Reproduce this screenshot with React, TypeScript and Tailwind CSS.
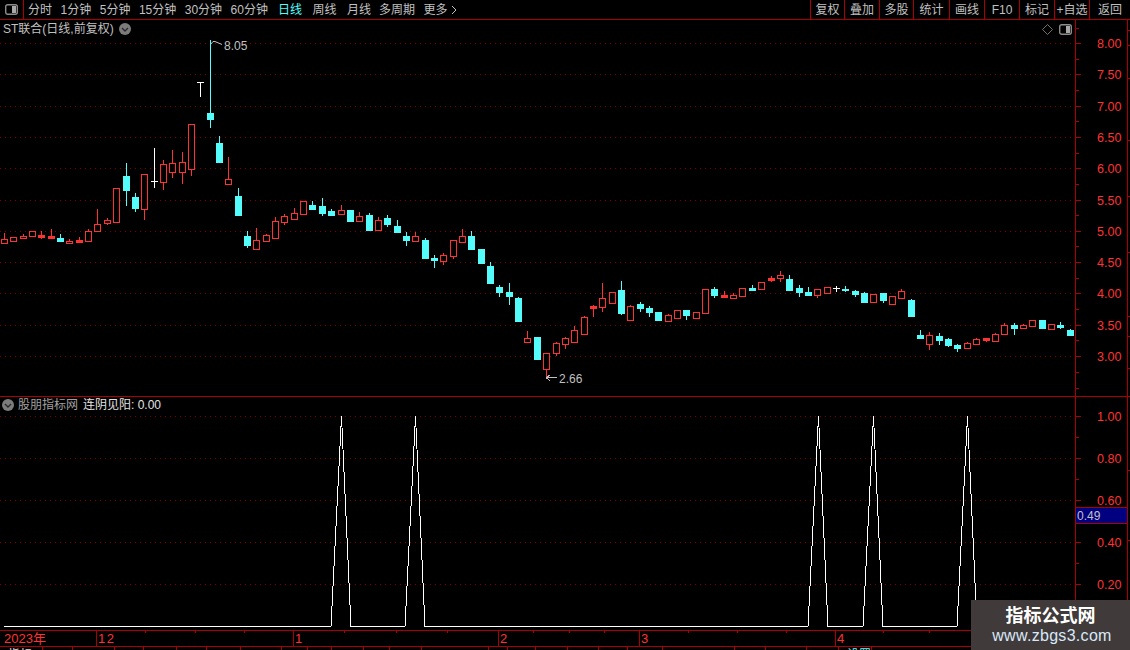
const RED = "#ff3232";
const CYAN = "#54fcfc";
const LINE = "#aa0000";

// x, body top, body bottom, high, low, kind (r hollow red, R solid red, c cyan, w white cross)
type Candle = [number, number, number, number, number, string];

const candles: Candle[] = [
  [4, 239, 243, 233, 243, "r"], [13, 237, 241, 237, 242, "r"], [23, 236, 238, 234, 238, "r"], [32, 231, 236, 231, 236, "r"],
  [41, 235, 237, 231, 239, "R"], [51, 236, 238, 229, 238, "R"], [60, 238, 241, 234, 242, "c"], [69, 241, 243, 239, 243, "r"],
  [79, 240, 242, 237, 242, "R"], [88, 231, 241, 229, 241, "r"], [97, 224, 231, 209, 231, "r"], [107, 220, 223, 218, 225, "r"],
  [116, 188, 222, 188, 223, "r"], [126, 176, 190, 163, 206, "c"], [135, 197, 208, 193, 212, "c"], [144, 174, 209, 174, 220, "r"],
  [154, 181, 181, 148, 188, "w"], [163, 164, 182, 160, 190, "r"], [172, 163, 172, 150, 178, "r"], [182, 162, 172, 152, 184, "r"],
  [191, 124, 169, 124, 176, "r"], [200, 82, 82, 82, 97, "w"], [210, 113, 119, 40, 128, "c"], [219, 143, 162, 136, 162, "c"],
  [228, 179, 184, 157, 184, "r"], [238, 196, 215, 188, 215, "c"], [247, 236, 245, 231, 248, "c"], [256, 240, 249, 228, 250, "r"],
  [266, 235, 241, 234, 241, "r"], [275, 221, 238, 217, 238, "r"], [284, 216, 222, 214, 225, "r"], [294, 213, 219, 208, 219, "r"],
  [303, 201, 214, 201, 215, "r"], [312, 205, 209, 201, 210, "c"], [322, 206, 213, 198, 216, "c"], [331, 211, 215, 209, 216, "c"],
  [341, 210, 214, 205, 214, "r"], [350, 210, 221, 210, 221, "c"], [359, 216, 221, 212, 221, "r"], [369, 215, 230, 213, 230, "c"],
  [378, 220, 230, 217, 230, "r"], [387, 218, 224, 215, 227, "c"], [397, 226, 232, 220, 233, "c"], [406, 236, 240, 232, 246, "c"],
  [415, 236, 241, 232, 242, "r"], [425, 240, 258, 238, 259, "c"], [434, 258, 260, 255, 268, "c"], [443, 255, 261, 253, 265, "r"],
  [453, 240, 256, 240, 259, "r"], [462, 236, 242, 229, 242, "r"], [471, 236, 249, 231, 250, "c"], [481, 249, 263, 249, 263, "c"],
  [490, 266, 283, 262, 283, "c"], [499, 287, 292, 285, 297, "c"], [509, 292, 296, 283, 305, "c"], [518, 298, 321, 297, 321, "c"],
  [527, 338, 342, 331, 343, "r"], [537, 337, 359, 337, 359, "c"], [546, 353, 369, 353, 377, "r"], [556, 343, 353, 342, 356, "r"],
  [565, 338, 344, 337, 349, "r"], [574, 330, 342, 326, 342, "r"], [584, 317, 334, 316, 334, "r"], [593, 306, 308, 305, 317, "R"],
  [602, 298, 307, 283, 312, "r"], [612, 292, 303, 292, 304, "r"], [621, 290, 313, 281, 315, "c"], [630, 306, 320, 305, 320, "r"],
  [640, 304, 308, 302, 312, "c"], [649, 308, 312, 306, 317, "c"], [658, 312, 320, 312, 321, "c"], [668, 315, 321, 314, 322, "r"],
  [677, 310, 318, 310, 318, "r"], [686, 310, 315, 310, 320, "c"], [696, 312, 318, 312, 318, "r"], [705, 289, 313, 289, 313, "r"],
  [714, 289, 295, 287, 298, "c"], [724, 295, 297, 291, 298, "R"], [733, 295, 298, 293, 298, "r"], [742, 288, 296, 288, 296, "r"],
  [752, 288, 290, 285, 291, "c"], [761, 282, 289, 282, 290, "r"], [771, 278, 280, 276, 282, "R"], [780, 275, 278, 271, 282, "r"],
  [789, 279, 290, 275, 291, "c"], [799, 288, 292, 285, 297, "c"], [808, 292, 295, 287, 296, "c"], [817, 289, 295, 289, 298, "r"],
  [827, 287, 293, 287, 293, "r"], [836, 288, 288, 286, 292, "w"], [845, 289, 290, 286, 292, "c"], [855, 291, 294, 290, 297, "c"],
  [864, 293, 302, 292, 303, "c"], [873, 294, 302, 294, 303, "r"], [883, 293, 300, 293, 303, "c"], [892, 296, 304, 296, 305, "r"],
  [901, 291, 298, 289, 298, "r"], [911, 300, 316, 299, 316, "c"], [920, 335, 338, 330, 338, "c"], [929, 335, 344, 332, 350, "r"],
  [939, 336, 340, 333, 345, "c"], [948, 339, 345, 338, 347, "c"], [957, 345, 348, 344, 352, "c"], [967, 343, 348, 342, 348, "r"],
  [976, 339, 344, 338, 344, "r"], [986, 338, 340, 338, 342, "R"], [995, 334, 341, 333, 341, "r"], [1004, 325, 334, 323, 334, "r"],
  [1014, 325, 328, 323, 335, "c"], [1023, 325, 328, 324, 329, "r"], [1032, 320, 326, 320, 327, "r"], [1042, 320, 328, 320, 328, "c"],
  [1051, 324, 329, 324, 329, "r"], [1060, 325, 327, 322, 329, "c"], [1070, 330, 335, 329, 335, "c"],
];

const priceGrid = [43, 74, 106, 137, 168, 200, 231, 262, 293, 325, 356];
const priceLabels = ["8.00", "7.50", "7.00", "6.50", "6.00", "5.50", "5.00", "4.50", "4.00", "3.50", "3.00"];
const priceMinor = [28, 59, 90, 121, 153, 184, 215, 246, 278, 309, 340, 372, 388];
const indGrid = [416, 458, 500, 542, 584];
const indLabels = ["1.00", "0.80", "0.60", "0.40", "0.20"];
const indMinor = [437, 479, 521, 563, 605];
const peaks = [341, 415, 818, 873, 967];

const leftTabs = [
  { label: "分时", cls: "" }, { label: "1分钟", cls: "" }, { label: "5分钟", cls: "" },
  { label: "15分钟", cls: "" }, { label: "30分钟", cls: "" }, { label: "60分钟", cls: "" },
  { label: "日线", cls: "ml-[1.5px] text-[#54fcfc]" }, { label: "周线", cls: "ml-[2px]" }, { label: "月线", cls: "ml-[2px]" },
  { label: "多周期", cls: "-ml-[0.5px]" },
];
const rightTabs = [
  { label: "复权", w: "w-[34px]" }, { label: "叠加", w: "w-[35px]" }, { label: "多股", w: "w-[34px]" },
  { label: "统计", w: "w-[36px]" }, { label: "画线", w: "w-[35px]" }, { label: "F10", w: "w-[35px]" },
  { label: "标记", w: "w-[35px]" }, { label: "+自选", w: "w-[35px]" }, { label: "返回", w: "w-[41px]" },
];
const timeTicks = [145, 195, 244, 344, 396, 447, 533, 569, 604, 688, 737, 786, 883, 929];
const bottomCells = [43, 30, 42, 29, 33, 30, 34, 41, 26, 24, 32, 26, 32, 67, 19, 28, 32, 31, 29, 35, 72, 31, 41, 32, 33];

function PanelToggle() {
  return (
    <svg width="13" height="11" viewBox="0 0 13 11">
      <rect x="0.7" y="0.7" width="11.6" height="9.6" rx="2" fill="none" stroke="#8c8c8c" strokeWidth="1.4" />
      <rect x="7" y="2" width="4" height="7" fill="#a8a8a8" />
    </svg>
  );
}

function ChevronDot() {
  return (
    <svg width="12" height="12" viewBox="0 0 12 12">
      <circle cx="6" cy="6" r="6" fill="#7c7c7c" />
      <path d="M3 5 L6 8 L9 5" fill="none" stroke="#2a2a2a" strokeWidth="1.4" />
    </svg>
  );
}

function Candles() {
  return (
    <g shapeRendering="crispEdges">
      {candles.map(([x, top, bot, hi, lo, kind]) => {
        const color = kind === "c" ? CYAN : kind === "w" ? "#ffffff" : RED;
        return (
          <g key={x}>
            <line x1={x + 0.5} x2={x + 0.5} y1={hi} y2={top} stroke={color} />
            <line x1={x + 0.5} x2={x + 0.5} y1={bot} y2={lo} stroke={color} />
            {kind === "r" && <rect x={x - 2.5} y={top + 0.5} width={6} height={bot - top} fill="#000" stroke={color} />}
            {(kind === "R" || kind === "c") && <rect x={x - 3} y={top} width={7} height={bot - top + 1} fill={color} />}
            {kind === "w" && <rect x={x - 3} y={top} width={7} height={1} fill={color} />}
          </g>
        );
      })}
    </g>
  );
}

function GridLines({ rows }: { rows: number[] }) {
  return (
    <g shapeRendering="crispEdges">
      {rows.map((y) => (
        <line key={y} x1={0} x2={1075} y1={y + 0.5} y2={y + 0.5} stroke="#800000" strokeDasharray="1 4" />
      ))}
    </g>
  );
}

function Axis(props: { top: number; height: number; rows: number[]; labels: string[]; minor: number[]; side: number[] }) {
  return (
    <svg width="55" height={props.height} viewBox={`1075 ${props.top} 55 ${props.height}`} className="block shrink-0">
      <g shapeRendering="crispEdges" stroke={LINE}>
        <line x1={1075.5} x2={1075.5} y1={props.top} y2={props.top + props.height} />
        <line x1={1127.5} x2={1127.5} y1={props.top} y2={props.top + props.height} />
        {props.rows.map((y) => (
          <line key={y} x1={1076} x2={1081} y1={y + 0.5} y2={y + 0.5} />
        ))}
        {props.minor.map((y) => (
          <line key={y} x1={1076} x2={1079} y1={y + 0.5} y2={y + 0.5} />
        ))}
        {props.side.map((y) => (
          <line key={y} x1={1128} x2={1130} y1={y + 0.5} y2={y + 0.5} />
        ))}
      </g>
      {props.rows.map((y, i) => (
        <text key={y} x={1097} y={y + 5} fill={RED} fontSize="12.5">
          {props.labels[i]}
        </text>
      ))}
    </svg>
  );
}

function IndicatorLine() {
  const points = ["4,626.5"];
  peaks.forEach((p) => {
    points.push(`${p - 10},626.5`, `${p + 0.5},416`, `${p + 10},626.5`);
  });
  points.push("1070,626.5");
  return <polyline points={points.join(" ")} fill="none" stroke="#ffffff" strokeWidth="1" shapeRendering="crispEdges" />;
}

export default function App() {
  return (
    <div className="relative h-[650px] w-[1130px] overflow-hidden bg-black font-['Liberation_Sans','Noto_Sans_CJK_SC',sans-serif] text-xs text-[#c0c0c0]">
      {/* top toolbar */}
      <div className="flex h-5 items-center border-b border-[#aa0000]">
        <div className="flex h-full w-6 items-center justify-center border-r border-[#aa0000]">
          <PanelToggle />
        </div>
        <div className="ml-1 flex items-center gap-[8.5px]">
          {leftTabs.map((t) => (
            <span key={t.label} className={t.cls}>
              {t.label}
            </span>
          ))}
          <span className="flex items-center gap-[3px]">
            更多
            <svg width="6" height="10" viewBox="0 0 6 10">
              <path d="M1 1 L5 5 L1 9" fill="none" stroke="#c0c0c0" />
            </svg>
          </span>
        </div>
        <div className="ml-auto flex h-full">
          {rightTabs.map((t) => (
            <div key={t.label} className={`flex h-full items-center justify-center border-l border-[#aa0000] ${t.w}`}>
              {t.label}
            </div>
          ))}
        </div>
      </div>

      {/* price panel */}
      <div className="flex h-[377px] border-b border-[#aa0000]">
        <div className="relative w-[1075px]">
          <div className="absolute top-[1px] left-[3px] flex items-center gap-[5px] leading-4">
            <span>ST联合(日线,前复权)</span>
            <ChevronDot />
          </div>
          <div className="absolute top-[4px] right-[3px] flex items-center gap-[6px]">
            <svg width="11" height="11" viewBox="0 0 11 11">
              <path d="M5.5 0.5 L10.5 5.5 L5.5 10.5 L0.5 5.5 Z" fill="none" stroke="#707070" />
            </svg>
            <PanelToggle />
          </div>
          <svg width="1075" height="376" viewBox="0 20 1075 376" className="block">
            <GridLines rows={priceGrid} />
            <Candles />
            <path d="M211 44 L213 41.5 H215 L222 44.5" fill="none" stroke="#c0c0c0" />
            <text x={224} y={50} fill="#c0c0c0" fontSize="12">8.05</text>
            <path d="M546 377.5 H557 M546 377.5 L550 375 M546 377.5 L550 381" fill="none" stroke="#c0c0c0" shapeRendering="crispEdges" />
            <text x={559} y={383} fill="#c0c0c0" fontSize="12">2.66</text>
          </svg>
        </div>
        <Axis top={20} height={376} rows={priceGrid} labels={priceLabels} minor={priceMinor} side={[30, 45, 78, 140, 196, 252, 316, 336, 368]} />
      </div>

      {/* indicator panel */}
      <div className="flex h-[234px] border-b border-[#aa0000]">
        <div className="relative w-[1075px]">
          <div className="absolute top-0 left-[2px] flex items-center gap-[4px] leading-4">
            <ChevronDot />
            <span className="text-[#a0a0a0]">股朋指标网</span>
            <span className="ml-[1px] text-[#e4e4e4]">连阴见阳: 0.00</span>
          </div>
          <svg width="1075" height="233" viewBox="0 397 1075 233" className="block">
            <GridLines rows={indGrid} />
            <IndicatorLine />
          </svg>
        </div>
        <div className="relative">
          <Axis top={397} height={233} rows={indGrid} labels={indLabels} minor={indMinor} side={[470, 540, 610]} />
          <div className="absolute top-[110px] left-[1px] flex h-[17px] w-[51px] items-center border-y border-[#aa0000] bg-[#000080] pl-[1px] text-[#c0c0c0]">
            0.49
          </div>
        </div>
      </div>

      {/* time axis */}
      <div className="relative flex h-4 border-b border-[#aa0000] leading-[15px] text-[#ff3232]">
        <div className="w-[97px] border-r border-[#aa0000] pl-[4px] text-[13px]">2023年</div>
        <div className="w-[197px] border-r border-[#aa0000] pl-[1px] tracking-[1.5px] text-[13px]">12</div>
        <div className="w-[205px] border-r border-[#aa0000] pl-[1px] text-[13px]">1</div>
        <div className="w-[141px] border-r border-[#aa0000] pl-[1px] text-[13px]">2</div>
        <div className="w-[196px] border-r border-[#aa0000] pl-[1px] text-[13px]">3</div>
        <div className="flex-1 pl-[1px] text-[13px]">4</div>
        <svg width="1130" height="2" className="absolute top-0 left-0">
          {timeTicks.map((x) => (
            <line key={x} x1={x + 0.5} x2={x + 0.5} y1={0} y2={2} stroke={LINE} shapeRendering="crispEdges" />
          ))}
        </svg>
      </div>

      {/* bottom tabs, cut off by the window */}
      <div className="flex h-[3px] overflow-hidden leading-4">
        {bottomCells.map((w, i) => (
          <div key={i} style={{ width: w }} className="shrink-0 border-r border-[#aa0000] pl-2">
            {i === 0 && <span className="text-[#e0e0e0]">指标</span>}
            {i === 1 && <span className="text-[#e0e0e0]">+</span>}
            {i === 24 && <span className="text-[#54fcfc]">设置</span>}
          </div>
        ))}
      </div>

      {/* watermark */}
      <div className="absolute right-0 bottom-0 flex h-[50px] w-[159px] flex-col items-center bg-[#403a3a] pt-[3px]">
        <span className="text-[18px] leading-[26px] font-bold text-white">指标公式网</span>
        <span className="ml-[3px] text-[16px] leading-[14px] tracking-[0.3px] text-[#d8e8f8]">www.zbgs3.com</span>
      </div>
    </div>
  );
}
